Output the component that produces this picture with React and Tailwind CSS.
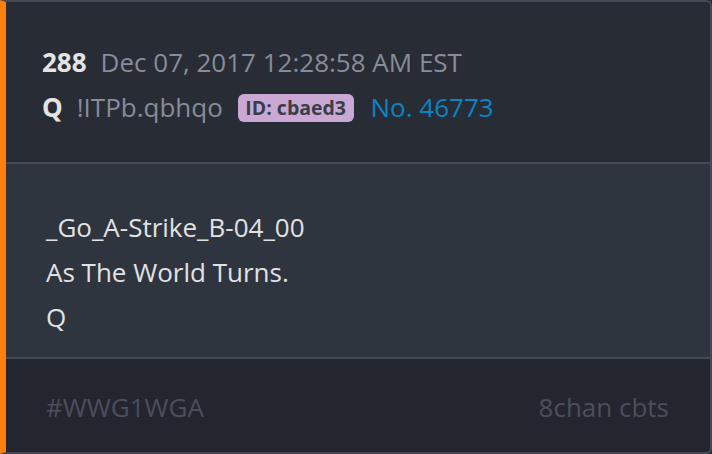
export default function App() {
  return (
    <div className="w-[712px] h-[454px] bg-[#2a2e37]" style={{ fontFamily: '"Open Sans", sans-serif' }}>
      <div className="h-[454px] flex flex-col border-2 border-[#444955] border-l-[6px] border-l-[#ff7f0e] rounded-r-[6px] overflow-hidden">
        <div className="bg-[#282c35] pl-[36px] pt-[38px] pb-[32px] text-[26px] leading-[45px]">
          <div className="flex items-center">
            <span className="font-bold text-[#e4e4e4]">288</span>
            <span className="ml-[14px] text-[#878c99]">Dec 07, 2017 12:28:58 AM EST</span>
          </div>
          <div className="flex items-center">
            <span className="font-bold text-[#e4e4e4]">Q</span>
            <span className="ml-[14px] text-[#878c99]">!ITPb.qbhqo</span>
            <span className="ml-[15px] px-[7.5px] h-[28px] flex items-center rounded-[6px] bg-[#c9a8d4] text-[#3a3e49] font-bold text-[19.5px]">
              ID: cbaed3
            </span>
            <span className="ml-[17px] text-[#0a84c6]">No. 46773</span>
          </div>
        </div>
        <div className="h-[2px] bg-[#444955]" />
        <div className="bg-[#2f353f] pl-[40px] pt-[41px] pb-[17px] text-[26px] leading-[45px] text-[#e2e2e2]">
          <div>_Go_A-Strike_B-04_00</div>
          <div>As The World Turns.</div>
          <div>Q</div>
        </div>
        <div className="h-[2px] bg-[#444955]" />
        <div className="flex-1 bg-[#23262e] pl-[40px] pr-[41px] pt-[3px] flex items-center justify-between text-[26px] text-[#4a4f5b]">
          <span>#WWG1WGA</span>
          <span>8chan cbts</span>
        </div>
      </div>
    </div>
  );
}
